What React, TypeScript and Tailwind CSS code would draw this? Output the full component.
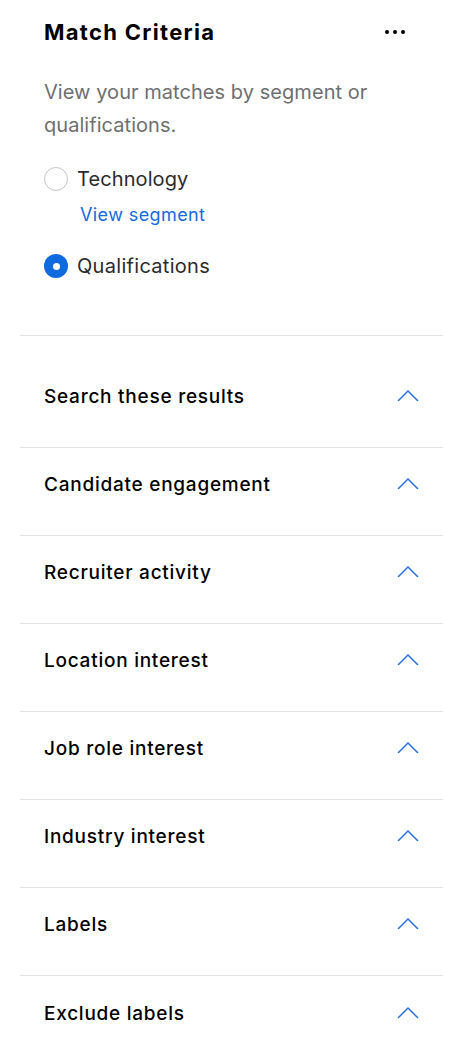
import React from "react";

const sections = [
  "Search these results",
  "Candidate engagement",
  "Recruiter activity",
  "Location interest",
  "Job role interest",
  "Industry interest",
  "Labels",
  "Exclude labels",
];

function ChevronUp() {
  return (
    <svg width="22" height="13" viewBox="0 0 22 13" fill="none" className="mb-[4px] block">
      <path d="M1 12 L11 2 L21 12" stroke="#2b72e0" strokeWidth="1.5" />
    </svg>
  );
}

function Radio({ checked }: { checked: boolean }) {
  return checked ? (
    <span className="flex h-6 w-6 shrink-0 items-center justify-center rounded-full bg-[#0f6ae0]">
      <span className="h-[7px] w-[7px] rounded-full bg-white" />
    </span>
  ) : (
    <span className="h-6 w-6 shrink-0 rounded-full border border-[#c4c4c4] bg-white" />
  );
}

export default function App() {
  return (
    <div
      className="min-h-[1056px] w-[468px] bg-white"
      style={{ fontFamily: "Inter, 'Noto Sans', sans-serif" }}
    >
      <div className="px-[44px] pt-[17px]">
        <div className="flex items-center justify-between">
          <h1 className="text-[22px] font-bold leading-[30px] tracking-[1.3px] text-black">
            Match Criteria
          </h1>
          <div className="mr-[19px] flex gap-[4px]">
            <span className="h-1 w-1 rounded-full bg-black" />
            <span className="h-1 w-1 rounded-full bg-black" />
            <span className="h-1 w-1 rounded-full bg-black" />
          </div>
        </div>
        <p className="mt-[29px] text-[20px] leading-[33px] tracking-[0.05px] text-[#6f6f6f]">
          View your matches by segment or qualifications.
        </p>
        <div className="mt-[22px] flex items-center gap-[9px]">
          <Radio checked={false} />
          <span className="text-[20px] tracking-[0.1px] text-[#2b2b2b]">Technology</span>
        </div>
        <div className="ml-[36px] mt-[7px] text-[18px] tracking-[0.4px] text-[#1769e0]">
          View segment
        </div>
        <div className="mt-[23px] flex items-center gap-[9px]">
          <Radio checked />
          <span className="text-[20px] tracking-[0.3px] text-[#2b2b2b]">Qualifications</span>
        </div>
      </div>
      <div className="ml-[20px] mr-[25px] mt-[54px] border-t border-[#e2e2e2]" />
      <div className="ml-[20px] mr-[25px] pt-[24px]">
        {sections.map((s, i) => (
          <div
            key={s}
            className={
              "flex h-[88px] items-center justify-between pb-[12px] pl-[24px] pr-[24px] " +
              (i < sections.length - 1 ? "border-b border-[#e2e2e2]" : "")
            }
          >
            <span className="text-[19px] font-medium tracking-[0.75px] text-black">{s}</span>
            <ChevronUp />
          </div>
        ))}
      </div>
    </div>
  );
}
